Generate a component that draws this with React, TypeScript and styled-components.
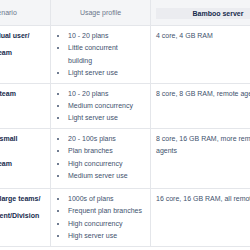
import React from 'react'
import styled, { createGlobalStyle } from 'styled-components'

const GlobalStyle = createGlobalStyle`
  html, body {
    margin: 0;
    padding: 0;
    background: #ffffff;
  }
  body {
    font-family: "Liberation Sans", Arial, sans-serif;
  }
`

const Viewport = styled.div`
  width: 250px;
  height: 250px;
  overflow: hidden;
`

const Table = styled.table`
  margin-left: -44px;
  border-collapse: separate;
  border-spacing: 0;
  table-layout: fixed;
  width: 330px;
  font-size: 7px;
  line-height: 12.4px;
  color: #172b4d;
`

const Col = styled.col<{ $w: number }>`
  width: ${({ $w }) => $w}px;
`

const HeadRow = styled.tr`
  height: 26px;
`

const HeadCell = styled.th`
  box-sizing: border-box;
  background: #f4f5f7;
  border-right: 1px solid #e4e6ea;
  border-bottom: 1px solid #e4e6ea;
  padding: 1px 5px 0;
  font-weight: normal;
  color: #6b778c;
  text-align: center;
  vertical-align: middle;
`

const HeadBox = styled.div`
  background: #ebecf0;
  line-height: 11px;
  font-weight: bold;
  color: #172b4d;
`

const Row = styled.tr<{ $h: number }>`
  height: ${({ $h }) => $h}px;
`

const Cell = styled.td`
  box-sizing: border-box;
  border-right: 1px solid #e4e6ea;
  border-bottom: 1px solid #e4e6ea;
  padding: 4px 5px 3px;
  vertical-align: top;
  color: #42526e;
`

const Scenario = styled(Cell)`
  color: #172b4d;
  font-weight: bold;
`

const ScenarioLine = styled.div<{ $gap?: boolean }>`
  white-space: nowrap;
  margin-top: ${({ $gap }) => ($gap ? '5px' : '0')};
`

const Bullets = styled.ul`
  margin: 0;
  padding: 0 0 0 12px;
  max-width: 74px;
`

const Bullet = styled.li`
  list-style: disc;
`

type Line = { text: string; gap?: boolean }

const rows: { h: number; scenario: Line[]; usage: string[]; server: string }[] = [
  {
    h: 57,
    scenario: [{ text: 'Solo/individual user/' }, { text: 'Small dev team', gap: true }],
    usage: ['10 - 20 plans', 'Little concurrent building', 'Light server use'],
    server: '4 core, 4 GB RAM',
  },
  {
    h: 45,
    scenario: [{ text: 'Small agile team' }],
    usage: ['10 - 20 plans', 'Medium concurrency', 'Light server use'],
    server: '8 core, 8 GB RAM, remote agents',
  },
  {
    h: 60,
    scenario: [{ text: 'Enterprise/ small' }, { text: 'business' }, { text: 'Small dev team' }],
    usage: ['20 - 100s plans', 'Plan branches', 'High concurrency', 'Medium server use'],
    server: '8 core, 16 GB RAM, more remote agents',
  },
  {
    h: 58,
    scenario: [{ text: 'Enterprise, large teams/' }, { text: 'Or Department/Division', gap: true }],
    usage: ['1000s of plans', 'Frequent plan branches', 'High concurrency', 'High server use'],
    server: '16 core, 16 GB RAM, all remote agents',
  },
]

const App: React.FC = () => {
  return (
    <Viewport>
      <GlobalStyle />
      <Table>
        <colgroup>
          <Col $w={95} />
          <Col $w={100} />
          <Col $w={135} />
        </colgroup>
        <thead>
          <HeadRow>
            <HeadCell>Scenario</HeadCell>
            <HeadCell>Usage profile</HeadCell>
            <HeadCell>
              <HeadBox>Bamboo server</HeadBox>
            </HeadCell>
          </HeadRow>
        </thead>
        <tbody>
          {rows.map((row, i) => (
            <Row key={i} $h={row.h}>
              <Scenario>
                {row.scenario.map((line, j) => (
                  <ScenarioLine key={j} $gap={line.gap}>{line.text}</ScenarioLine>
                ))}
              </Scenario>
              <Cell>
                <Bullets>
                  {row.usage.map((u) => (
                    <Bullet key={u}>{u}</Bullet>
                  ))}
                </Bullets>
              </Cell>
              <Cell>{row.server}</Cell>
            </Row>
          ))}
        </tbody>
      </Table>
    </Viewport>
  )
}

export default App
